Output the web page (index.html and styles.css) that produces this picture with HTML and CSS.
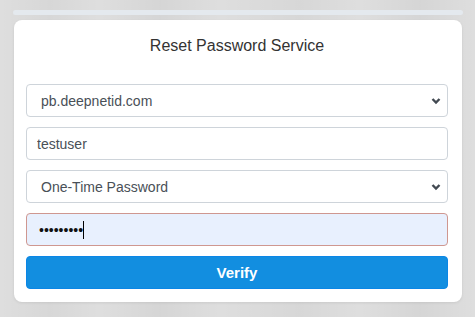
FILE: index.html
```html
<!DOCTYPE html>
<html>
<head>
<meta charset="utf-8">
<link rel="stylesheet" href="styles.css">
</head>
<body>
<div class="page">
  <div class="topbar"></div>
  <div class="card">
    <h1 class="title">Reset Password Service</h1>
    <form class="form">
      <select class="field select">
        <option>pb.deepnetid.com</option>
      </select>
      <input class="field input" type="text" value="testuser">
      <select class="field select">
        <option>One-Time Password</option>
      </select>
      <div class="pwd-wrap">
        <input class="field input pwd" type="password" value="123456789">
        <span class="caret"></span>
      </div>
      <button class="btn" type="button">Verify</button>
    </form>
  </div>
</div>
</body>
</html>
```

FILE: styles.css
```css
* { box-sizing: border-box; }
html, body { margin: 0; padding: 0; }
body {
  width: 475px;
  height: 317px;
  overflow: hidden;
  font-family: "Liberation Sans", Arial, sans-serif;
  background-color: #dedede;
  background-image:
    linear-gradient(90deg, rgba(0,0,0,0) 0, rgba(0,0,0,0.03) 50px, rgba(0,0,0,0) 100px, rgba(0,0,0,0.04) 160px, rgba(0,0,0,0) 220px, rgba(0,0,0,0.03) 300px, rgba(0,0,0,0) 360px, rgba(0,0,0,0.04) 420px, rgba(0,0,0,0) 475px);
}
.page {
  padding: 10px 12px 0 13px;
}
.topbar {
  height: 5px;
  background: #e4e9ee;
  border-radius: 3px;
}
.card {
  margin: 5px 1px 0 1px;
  width: 448px;
  background: #fff;
  border-radius: 8px;
  padding: 16px 14px 13px 12px;
  box-shadow: 0 1px 3px rgba(0,0,0,0.08);
}
.title {
  margin: 0 0 28px;
  font-size: 16px;
  line-height: 20px;
  font-weight: normal;
  color: #333;
  text-align: center;
}
.form {
  display: flex;
  flex-direction: column;
  gap: 10px;
}
.field {
  display: block;
  width: 100%;
  height: 33px;
  margin: 0;
  border: 1px solid #ced4da;
  border-radius: 4px;
  background: #fff;
  font-family: "Liberation Sans", Arial, sans-serif;
  font-size: 14px;
  color: #495057;
  outline: none;
}
.input {
  padding: 0 10px;
}
.select {
  -webkit-appearance: none;
  appearance: none;
  padding: 0 30px 0 14px;
  background-image: url("data:image/svg+xml,%3Csvg xmlns='http://www.w3.org/2000/svg' width='10' height='8' viewBox='0 0 10 8'%3E%3Cpath d='M1.5 2 L5 5.5 L8.5 2' fill='none' stroke='%23434a52' stroke-width='2.4'/%3E%3C/svg%3E");
  background-repeat: no-repeat;
  background-position: right 6px center;
  background-size: 10px 8px;
}
.pwd-wrap {
  position: relative;
}
.field.pwd {
  background: #e8f0fe;
  border: 1px solid #cf9790;
  color: #111;
  padding: 0 12px;
}
.caret {
  position: absolute;
  left: 57px;
  top: 8px;
  width: 1px;
  height: 18px;
  background: #000;
}
.btn {
  height: 33px;
  width: 100%;
  margin: 0;
  border: 1px solid #0b86e6;
  border-radius: 4px;
  background: #128ee0;
  color: #fff;
  font-family: "Liberation Sans", Arial, sans-serif;
  font-size: 15px;
  font-weight: bold;
}
```
